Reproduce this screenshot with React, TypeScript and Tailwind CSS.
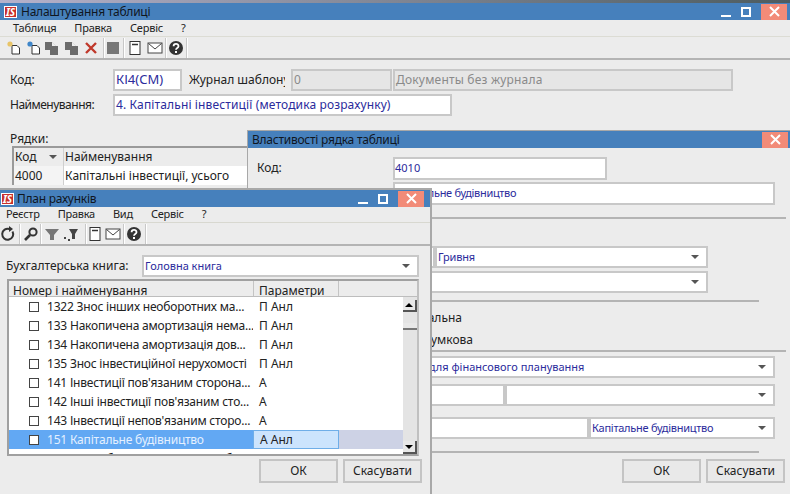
import type { ReactNode } from 'react'

const inputCls = 'h-[22px] border-2 border-[#c8c8c8] bg-white flex items-center px-[1px] text-[#2b2b9c] whitespace-nowrap overflow-hidden'
const btnCls = 'h-[24px] w-[79px] border-2 border-[#c4c4c4] bg-[#e9e9e9] flex items-center justify-center text-[#222]'
const sepCls = 'h-[2px] bg-[#b4b4b4]'

const rows = [
  { text: '1322 Знос інших необоротних ма...', par: 'П Анл' },
  { text: '133 Накопичена амортизація нема...', par: 'П Анл' },
  { text: '134 Накопичена  амортизація дов...', par: 'П Анл' },
  { text: '135 Знос інвестиційної нерухомості', par: 'П Анл' },
  { text: '141 Інвестиції пов\'язаним сторона...', par: 'А' },
  { text: '142 Інші інвестиції пов\'язаним сто...', par: 'А' },
  { text: '143 Інвестиції непов\'язаним сторо...', par: 'А' },
  { text: '151 Капітальне будівництво', par: 'А Анл', selected: true },
  { text: '1521 Придбання основних засобів', par: 'А Анл' },
]

function Logo() {
  return (
    <span className="w-[13px] h-[12px] bg-[#c9302c] border border-white text-white text-[10px] font-bold italic tracking-normal leading-none flex items-center justify-center shrink-0">
      IS
    </span>
  )
}

function WinButtons({ full }: { full?: boolean }) {
  return (
    <div className="ml-auto flex items-center h-full">
      {full && (
        <>
          <span className="w-[10px] h-[2px] bg-white self-end mb-[3px] mr-[10px]" />
          <span className="w-[10px] h-[10px] border-2 border-white mr-[10px]" />
        </>
      )}
      <span className="w-[26px] h-[16px] bg-[#f28b78] flex items-center justify-center">
        <svg width="11" height="11" viewBox="0 0 11 11" stroke="white" strokeWidth="2">
          <path d="M1 1l9 9M10 1l-9 9" />
        </svg>
      </span>
    </div>
  )
}

function TitleBar({ title, full, logo, className }: { title: string; full?: boolean; logo?: boolean; className: string }) {
  return (
    <div className={`h-[17px] bg-[#4680bc] flex items-center text-[#10161f] text-[12px] shrink-0 ${className}`}>
      {logo && <Logo />}
      <span className="tracking-[-0.25px]">{title}</span>
      <WinButtons full={full} />
    </div>
  )
}

function Ico({ children }: { children: ReactNode }) {
  return (
    <svg width="16" height="16" viewBox="0 0 16 16" fill="none" className="shrink-0">
      {children}
    </svg>
  )
}

const Sep = ({ className = '' }: { className?: string }) => (
  <span className={`w-[2px] h-[20px] bg-[#c8c8c8] border-r border-white shrink-0 ${className}`} />
)

const DocIcon = ({ dot }: { dot: string }) => (
  <Ico>
    <path d="M6 5.5h5l2.5 2.5v6h-7.5z" fill="white" stroke="#333" />
    <circle cx="4" cy="4" r="2.6" fill={dot} />
  </Ico>
)
const CopyIcon = () => (
  <Ico>
    <path d="M1 2h7v4h6v9H6v-5H1z" fill="#6b6b6b" />
    <path d="M8 2l4 4" stroke="#ddd" />
  </Ico>
)
const FormIcon = () => (
  <Ico>
    <rect x="3" y="1.5" width="10" height="13" fill="white" stroke="#333" />
    <path d="M5 4.5h6" stroke="#333" strokeWidth="1.5" />
  </Ico>
)
const MailIcon = () => (
  <Ico>
    <rect x="1" y="3" width="14" height="10" fill="white" stroke="#444" />
    <path d="M1.5 3.5L8 9l6.5-5.5" stroke="#444" />
  </Ico>
)
const HelpIcon = () => (
  <Ico>
    <circle cx="8" cy="8" r="7" fill="#333" />
    <path d="M5.6 6.2c0-3 4.9-3 4.9 0 0 1.8-2.5 1.7-2.5 3.5" stroke="white" strokeWidth="1.8" />
    <rect x="7" y="11" width="2" height="2" fill="white" />
  </Ico>
)
const Caret = () => (
  <span className="ml-auto mr-[6px] w-0 h-0 border-x-[4px] border-x-transparent border-t-[4px] border-t-[#555] shrink-0" />
)

function MainWindow() {
  return (
    <div className="h-[491px] flex flex-col">
      <TitleBar title="Налаштування таблиці" full logo className="pl-[4px] pr-[3px] gap-[4px]" />
      <div className="h-[16px] mt-[1px] flex items-center gap-[18px] pl-[13px] text-[11px] tracking-[-0.2px] border-b border-[#dcdcd4]">
        <span>Таблиця</span><span>Правка</span><span>Сервіс</span><span>?</span>
      </div>
      <div className="h-[21px] flex items-center pl-[6px]">
        <DocIcon dot="#e8c468" />
        <span className="ml-[4px]"><DocIcon dot="#3f86c9" /></span>
        <span className="ml-[2px]"><CopyIcon /></span>
        <span className="ml-[4px]"><CopyIcon /></span>
        <span className="ml-[3px]"><Ico><path d="M3 3l10 10M13 3L3 13" stroke="#c0392b" strokeWidth="2.4" /></Ico></span>
        <Sep className="ml-[4px]" />
        <Ico><rect x="2" y="2" width="12" height="12" fill="#777" /></Ico>
        <Sep className="ml-[2px]" />
        <span className="ml-[2px]"><FormIcon /></span>
        <span className="ml-[4px]"><MailIcon /></span>
        <Sep className="ml-[2px]" />
        <span className="ml-[1px]"><HelpIcon /></span>
        <Sep className="ml-[2px]" />
      </div>
      <div className={sepCls} />
      <div className="flex items-center mt-[9px] pl-[10px] gap-[1px]">
        <span className="w-[102px]">Код:</span>
        <div className={`${inputCls} w-[69px] text-[13px]`}>КІ4(СМ)</div>
        <span className="w-[96px] ml-[6px] overflow-hidden whitespace-nowrap">Журнал шаблону</span>
        <div className={`${inputCls} w-[101px] ml-[5px] !bg-[#e6e6e6] !text-[#8a8a8a]`}>0</div>
        <div className={`${inputCls} w-[340px] !bg-[#e6e6e6] !text-[#8a8a8a] tracking-[0.2px]`}>Документы без журнала</div>
      </div>
      <div className="flex items-center mt-[3px] pl-[10px]">
        <span className="w-[103px] tracking-[-0.5px]">Найменування:</span>
        <div className={`${inputCls} w-[339px] tracking-[0.13px]`}>4. Капітальні інвестиції (методика розрахунку)</div>
      </div>
      <div className="mt-[15px] pl-[10px] h-[15px] leading-[15px]">Рядки:</div>
      <div className="ml-[12px] w-[235px] border-2 border-[#9a9a9a] border-r-0 border-b-0">
        <div className="flex h-[18px]">
          <div className="w-[50px] flex items-center pl-[1px] border-r border-[#cfcfcf]">Код<Caret /></div>
          <div className="flex-1 pl-[1px] flex items-center">Найменування</div>
        </div>
        <div className="flex h-[19px] bg-white">
          <div className="w-[50px] pl-[1px] flex items-center bg-[#f4f4f4] border-r border-[#cfcfcf]">4000</div>
          <div className="flex-1 pl-[1px] flex items-center">Капітальні інвестиції, усього</div>
        </div>
      </div>
    </div>
  )
}

function PropsWindow() {
  return (
    <div className="absolute left-[247px] top-[130px] w-[543px] h-[364px] bg-[#ececec] border-t border-l border-[#a8a8a8] flex flex-col">
      <TitleBar title="Властивості рядка таблиці" className="pl-[4px] pr-[2px]" />
      <div className="flex items-center mt-[9px] pl-[9px]">
        <span className="w-[136px] -mt-[2px]">Код:</span>
        <div className={`${inputCls} w-[214px] h-[23px] text-[11px] !px-0`}>4010</div>
      </div>
      <div className="flex items-center mt-[2px] pl-[9px]">
        <span className="w-[136px]">Найменування:</span>
        <div className={`${inputCls} w-[382px] h-[23px] text-[11px] tracking-[-0.3px]`}>Капітальне будівництво</div>
      </div>
      <div className={`${sepCls} mt-[12px] mr-[4px]`} />
      <div className="flex mt-[27px] pl-[145px]">
        <div className={`${inputCls} w-[42px]`} />
        <div className={`${inputCls} w-[273px] pl-[1px] text-[11px] tracking-[-0.2px]`}>Гривня<Caret /></div>
      </div>
      <div className="flex mt-[3px] pl-[145px]">
        <div className={`${inputCls} w-[315px]`}><Caret /></div>
      </div>
      <div className={`${sepCls} mt-[7px] mr-[31px]`} />
      <div className="h-[22px] mt-[5px] w-[214px] text-right leading-[22px]">Горизонтальна</div>
      <div className="h-[22px] w-[225px] text-right leading-[22px]">Підсумкова</div>
      <div className={`${sepCls} mt-[-1px] mr-[4px]`} />
      <div className="flex mt-[4px] pl-[117px]">
        <div className={`${inputCls} w-[410px] text-[11px]`}>Показники для фінансового планування<Caret /></div>
      </div>
      <div className="flex mt-[6px] pl-[145px]">
        <div className={`${inputCls} w-[112px]`} />
        <div className={`${inputCls} w-[270px]`}><Caret /></div>
      </div>
      <div className="flex mt-[11px] pl-[145px]">
        <div className={`${inputCls} w-[196px]`} />
        <div className={`${inputCls} w-[186px] text-[11px] tracking-[-0.25px]`}>Капітальне будівництво<Caret /></div>
      </div>
      <div className={`${sepCls} mt-[12px] mr-[31px]`} />
      <div className="flex justify-end gap-[5px] mt-[6px] pr-[5px]">
        <div className={btnCls}>ОК</div>
        <div className={btnCls}>Скасувати</div>
      </div>
    </div>
  )
}

function AccountsWindow() {
  return (
    <div className="absolute left-0 top-[188px] w-[432px] h-[306px] bg-[#ececec] border-t-2 border-r-2 border-[#a8a8a8] flex flex-col">
      <TitleBar title="План рахунків" full logo className="pl-[1px] pr-[6px] gap-[3px]" />
      <div className="h-[16px] flex items-center gap-[18px] pl-[6px] text-[11px] tracking-[-0.25px] border-b border-[#d8d8d0]">
        <span>Реєстр</span><span>Правка</span><span>Вид</span><span>Сервіс</span><span>?</span>
      </div>
      <div className="h-[21px] flex items-center">
        <Ico>
          <path d="M12.5 5.5a5.5 5.5 0 1 1-3-2.5" stroke="#333" strokeWidth="2" />
          <path d="M9 0l4 3-4 3z" fill="#333" />
        </Ico>
        <Sep className="ml-[3px]" />
        <span className="ml-[2px]">
          <Ico>
            <circle cx="10" cy="6" r="3.6" stroke="#333" strokeWidth="2" />
            <path d="M7 9l-5 5" stroke="#333" strokeWidth="2.6" />
          </Ico>
        </span>
        <Sep className="ml-[1px]" />
        <span className="ml-[2px]"><Ico><path d="M1 3h14l-5 6v5H6V9z" fill="#777" /></Ico></span>
        <span className="ml-[3px]">
          <Ico>
            <path d="M6 3h9l-3 5v5h-3V8z" fill="#444" />
            <rect x="1" y="11" width="2" height="2" fill="#444" />
            <rect x="5" y="13" width="2" height="2" fill="#444" />
          </Ico>
        </span>
        <Sep className="ml-[6px]" />
        <FormIcon />
        <span className="ml-[2px]"><MailIcon /></span>
        <Sep className="ml-[2px]" />
        <span className="ml-[1px]"><HelpIcon /></span>
        <Sep className="ml-[3px]" />
      </div>
      <div className={sepCls} />
      <div className="flex items-center mt-[9px] pl-[6px]">
        <span className="w-[136px]">Бухгалтерська книга:</span>
        <div className={`${inputCls} w-[277px] pl-[1px] text-[11px]`}>Головна книга<Caret /></div>
      </div>
      <div className="mt-[2px] ml-[7px] w-[412px] h-[177px] border-2 border-[#a0a0a0] border-r-[#c0c0c0] flex flex-col overflow-hidden">
        <div className="flex h-[16px] shrink-0 border-b border-[#bdbdbd]">
          <div className="w-[244px] pl-[4px] pt-[1px] leading-[18px]">Номер і найменування</div>
          <div className="w-[86px] pl-[5px] pt-[1px] leading-[18px] border-x border-[#c4c4c4]">Параметри</div>
        </div>
        <div className="flex flex-1 min-h-0">
          <div className="flex-1 bg-white overflow-hidden">
            {rows.map((r) => (
              <div key={r.text} className={`flex h-[19px] items-center ${r.selected ? 'bg-[#cdd2e5]' : ''}`}>
                <div className={`w-[244px] h-full flex items-center pl-[20px] shrink-0 whitespace-nowrap overflow-hidden tracking-[-0.2px] ${r.selected ? 'bg-[#62a8f3] text-[#e4f0ff]' : ''}`}>
                  <span className={`w-[10px] h-[10px] border border-[#444] mr-[8px] shrink-0 ${r.selected ? 'bg-white' : ''}`} />
                  {r.text}
                </div>
                <div className={`w-[86px] h-full flex items-center pl-[6px] ${r.selected ? 'bg-[#cce4fd] border border-[#6faee8]' : ''}`}>{r.par}</div>
              </div>
            ))}
          </div>
          <div className="w-[14px] bg-[#e4e4e4] flex flex-col shrink-0">
            <div className="h-[12px] mt-[3px] bg-[#e8e8e8] border-r-2 border-b-2 border-[#555] flex items-center justify-center">
              <span className="w-0 h-0 border-x-[4px] border-x-transparent border-b-[4px] border-b-black" />
            </div>
            <div className="h-[7px] mt-[11px] bg-[#e8e8e8] border-b-2 border-[#777]" />
            <div className="h-[13px] mt-auto bg-[#e8e8e8] border-r-2 border-b-2 border-[#555] flex items-center justify-center">
              <span className="w-0 h-0 border-x-[4px] border-x-transparent border-t-[4px] border-t-black" />
            </div>
          </div>
        </div>
      </div>
      <div className="flex justify-end gap-[5px] mt-[3px] pr-[8px]">
        <div className={btnCls}>ОК</div>
        <div className={btnCls}>Скасувати</div>
      </div>
    </div>
  )
}

export default function App() {
  return (
    <div className="relative w-[790px] h-[494px] overflow-hidden bg-[#ececec] text-[12px] text-[#222] font-['Liberation_Sans',sans-serif]">
      <div className="h-[3px] bg-gradient-to-r from-[#b6b2cc] to-[#4d5c60]" />
      <MainWindow />
      <PropsWindow />
      <AccountsWindow />
    </div>
  )
}
